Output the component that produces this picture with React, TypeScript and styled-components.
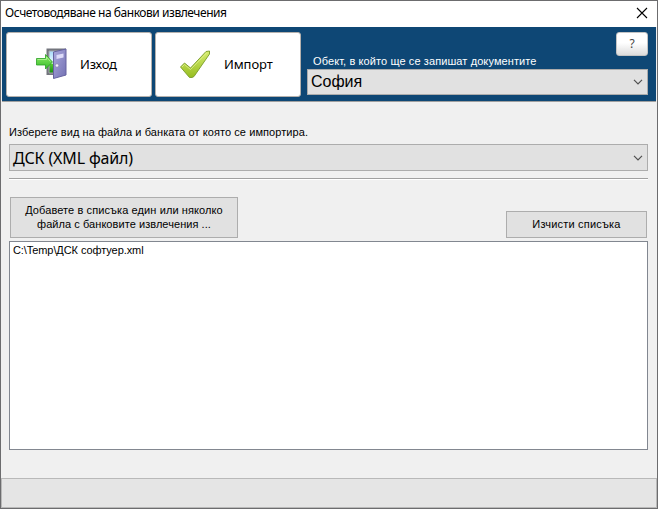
import React from 'react';
import styled, { createGlobalStyle } from 'styled-components';

const Global = createGlobalStyle`
  * { box-sizing: border-box; }
  body { margin: 0; background: #fff; font: 11px/14px "Liberation Sans", Arial, sans-serif; color: #000; }
  button { font: inherit; color: inherit; padding: 0; margin: 0; }
`;

const Dialog = styled.div`
  width: 658px;
  height: 509px;
  display: flex;
  flex-direction: column;
  background: #f0f0f0;
  border: 1px solid #6c6c6e;
`;

const Text = styled.span<{ $spacing?: number }>`
  white-space: pre;
  letter-spacing: ${(p) => p.$spacing ?? 0}px;
`;

const TitleBar = styled.header`
  height: 26px;
  flex: none;
  display: flex;
  align-items: center;
  justify-content: space-between;
  padding: 0 9px 2px 4px;
  background: #fff;
  font: 12px/16px "Noto Sans", sans-serif;
`;

const CloseButton = styled.button`
  display: flex;
  border: 0;
  background: none;
`;

const Toolbar = styled.div`
  height: 75px;
  flex: none;
  display: flex;
  margin: 0 1px;
  padding: 5px 8px 0 4px;
  background: #0e4775;
  border-bottom: 1px solid #a0a0a0;
`;

const ToolButton = styled.button<{ $inset: number }>`
  width: 146px;
  height: 65px;
  margin-right: 3px;
  padding: 0 0 2px ${(p) => p.$inset}px;
  display: flex;
  align-items: center;
  gap: 11px;
  background: #fff;
  border: 1px solid #b5b1ad;
  border-radius: 3px;
  font: 13px/18px "Noto Sans", sans-serif;
`;

const Place = styled.div`
  flex: 1;
  margin-left: 3px;
  display: flex;
  flex-direction: column;
`;

const PlaceTop = styled.div`
  height: 37px;
  display: flex;
  justify-content: space-between;
  padding-left: 6px;
  color: #fff;
`;

const PlaceLabel = styled.div`
  padding-top: 22px;
`;

const HelpButton = styled.button`
  width: 32px;
  height: 24px;
  border: 1px solid #c4c4c4;
  border-radius: 3px;
  background: linear-gradient(#fff 0%, #fff 45%, #dcdcdc 100%);
  color: #444;
  font: 12px/18px "Noto Sans", sans-serif;
`;

const Combo = styled.div<{ $height: number; $face: string; $size: number }>`
  height: ${(p) => p.$height}px;
  flex: none;
  display: flex;
  align-items: center;
  justify-content: space-between;
  padding: 0 4px 0 3px;
  background: #e1e1e1;
  border: 1px solid #acacac;
  font: ${(p) => p.$size}px/20px ${(p) => p.$face}, sans-serif;
`;

const Body = styled.main`
  flex: 1;
  display: flex;
  flex-direction: column;
  padding: 23px 9px 0 8px;
`;

const BankLabel = styled.div`
  height: 19px;
`;

const Divider = styled.hr`
  width: 100%;
  height: 2px;
  margin: 7px 0 17px;
  border: 0;
  border-top: 1px solid #a0a0a0;
  border-bottom: 1px solid #fff;
`;

const Actions = styled.div`
  display: flex;
  align-items: flex-end;
  justify-content: space-between;
  padding: 0 1px;
`;

const PushButton = styled.button<{ $width: number; $height: number }>`
  width: ${(p) => p.$width}px;
  height: ${(p) => p.$height}px;
  display: flex;
  flex-direction: column;
  align-items: center;
  justify-content: center;
  padding-bottom: 2px;
  background: #e1e1e1;
  border: 1px solid #adadad;
`;

const FileList = styled.div`
  height: 209px;
  margin-top: 3px;
  padding: 1px 3px;
  background: #fff;
  border: 1px solid #828790;
`;

const StatusBar = styled.footer`
  height: 30px;
  flex: none;
  background: #e5e5e5;
  border: 1px solid #b9b9b9;
`;

const Chevron = () => (
  <svg width="10" height="6" viewBox="0 0 10 6" fill="none">
    <path d="M1 .8 5 4.800 9 .8" stroke="#505050" strokeWidth="1.2" />
  </svg>
);

const ExitIcon = () => (
  <svg width="34" height="34" viewBox="0 0 34 34">
    <defs>
      <linearGradient id="door" x2="1" y2="1">
        <stop stopColor="#aaa8dc" />
        <stop offset="1" stopColor="#7371b3" />
      </linearGradient>
      <linearGradient id="arrow" x2="0" y2="1">
        <stop stopColor="#91ed66" />
        <stop offset="1" stopColor="#35bb2a" />
      </linearGradient>
      <linearGradient id="sky" x2="0" y2="1">
        <stop stopColor="#a5d9fa" />
        <stop offset=".55" stopColor="#f1fcff" />
        <stop offset=".6" stopColor="#54c92f" />
        <stop offset="1" stopColor="#168b12" />
      </linearGradient>
    </defs>
    <path d="M11.500 1.500H31V28H11.500z" fill="#73757d" />
    <path d="M14 4h13v22H14z" fill="url(#sky)" stroke="#a6a7ac" />
    <path d="M18.500 5 31 2v26l-12.500 3.500z" fill="url(#door)" stroke="#6663a0" />
    <path d="m21.500 8 7-1.500v4l-7 1.500z" fill="#dddcf9" />
    <circle cx="22" cy="18.500" r="1.700" fill="#f4f4ff" stroke="#777398" strokeWidth=".5" />
    <path d="M1.500 11.500h9V7.500l7 7.500-7 7v-4h-9z" fill="url(#arrow)" stroke="#299f23" strokeWidth=".8" />
    <path d="M2.500 12.500h9v-2.500l4 4.500" fill="none" stroke="#b8f69b" strokeWidth=".8" />
  </svg>
);

const CheckIcon = () => (
  <svg width="34" height="34" viewBox="0 0 34 34">
    <defs>
      <linearGradient id="check" x2="0" y2="1">
        <stop stopColor="#d7ed70" />
        <stop offset="1" stopColor="#96bd20" />
      </linearGradient>
    </defs>
    <path d="m1.500 20 4-4 6 5L27 4.500l3.500-.5v3L15 29.500l-2 1h-2.500z" fill="url(#check)" stroke="#789b28" strokeWidth=".9" />
    <path d="m3 20 2.500-2.500 6 5L27.500 6" fill="none" stroke="#e5f59b" strokeWidth=".7" />
  </svg>
);

export default function App() {
  return (
    <>
      <Global />
      <Dialog>
        <TitleBar>
          <Text $spacing={-0.45}>Осчетоводяване на банкови извлечения</Text>
          <CloseButton aria-label="Затвори">
            <svg width="12" height="12" viewBox="0 0 12 12">
              <path d="m1 1 10 10M11 1 1 11" stroke="#000" strokeWidth="1.100" />
            </svg>
          </CloseButton>
        </TitleBar>
        <Toolbar>
          <ToolButton $inset={28}><ExitIcon /><Text $spacing={-0.2}>Изход</Text></ToolButton>
          <ToolButton $inset={23}><CheckIcon /><Text $spacing={-0.1}>Импорт</Text></ToolButton>
          <Place>
            <PlaceTop>
              <PlaceLabel><Text $spacing={0.1}>Обект, в който ще се запишат документите</Text></PlaceLabel>
              <HelpButton>?</HelpButton>
            </PlaceTop>
            <Combo $height={26} $size={16} $face='"Liberation Sans"'>
              <Text>София</Text><Chevron />
            </Combo>
          </Place>
        </Toolbar>
        <Body>
          <BankLabel><Text $spacing={0.075}>Изберете вид на файла и банката от която се импортира.</Text></BankLabel>
          <Combo $height={27} $size={16} $face='"Noto Sans"'>
            <Text $spacing={-0.15}>ДСК (XML файл)</Text><Chevron />
          </Combo>
          <Divider />
          <Actions>
            <PushButton $width={228} $height={41}>
              <Text $spacing={0.1}>Добавете в списъка един или няколко</Text>
              <Text $spacing={0.06}>файла с банковите извлечения ...</Text>
            </PushButton>
            <PushButton $width={141} $height={27}><Text $spacing={0.2}>Изчисти списъка</Text></PushButton>
          </Actions>
          <FileList><Text $spacing={-0.08}>C:\Temp\ДСК софтуер.xml</Text></FileList>
        </Body>
        <StatusBar />
      </Dialog>
    </>
  );
}
